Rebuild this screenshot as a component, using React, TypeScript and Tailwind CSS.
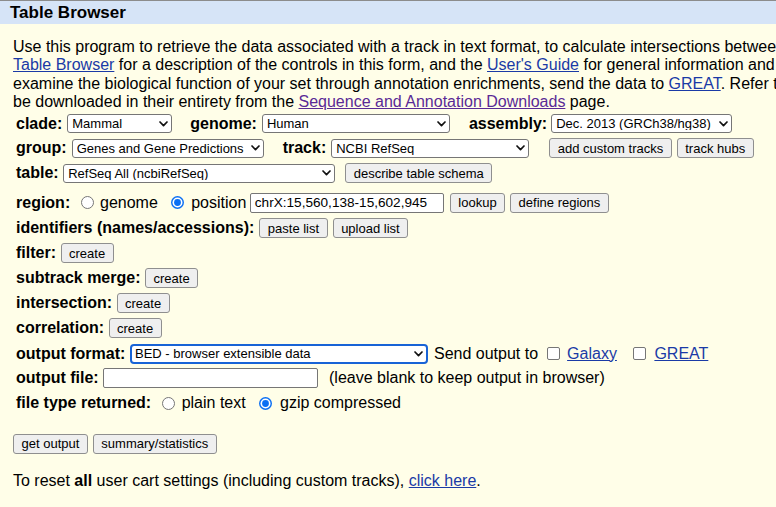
import React from "react";

const LINK = "text-[#1a3aa6] underline";
const VISITED = "text-[#5a2a96] underline";

function Chevron() {
  return (
    <svg width="9" height="6" viewBox="0 0 9 6" className="shrink-0 mr-[3px]">
      <path d="M1 1 L4.5 4.6 L8 1" fill="none" stroke="#111" strokeWidth="1.7" strokeLinecap="round" strokeLinejoin="round" />
    </svg>
  );
}

function Select({ className, children, focus }: { className: string; children: React.ReactNode; focus?: boolean }) {
  const base = focus
    ? "border-2 border-[#1863d6] rounded-[4px] h-[20px] pl-[3px]"
    : "border border-[#767676] rounded-[3px] h-[19px] pl-[4px]";
  return (
    <div className={`flex items-center shrink-0 bg-white text-[13px] leading-none ${base} ${className}`}>
      <span className="flex-1 overflow-hidden whitespace-nowrap">{children}</span>
      <Chevron />
    </div>
  );
}

function Button({ className = "", children }: { className?: string; children: React.ReactNode }) {
  return (
    <div className={`flex items-center shrink-0 h-[20px] px-[7.5px] border border-[#8f8f8f] rounded-[3px] bg-[#efefef] text-[13px] leading-none whitespace-nowrap ${className}`}>
      {children}
    </div>
  );
}

function Input({ className, value }: { className: string; value?: string }) {
  return (
    <div className={`flex items-center shrink-0 h-[20px] border border-[#767676] rounded-[2px] bg-white pl-[4px] text-[13.6px] leading-none whitespace-nowrap ${className}`}>
      {value}
    </div>
  );
}

function Radio({ checked, className }: { checked?: boolean; className: string }) {
  return (
    <svg width="13" height="13" viewBox="0 0 13 13" className={`shrink-0 ${className}`}>
      {checked ? (
        <>
          <circle cx="6.5" cy="6.5" r="6.5" fill="#0b6ff3" />
          <circle cx="6.5" cy="6.5" r="5" fill="white" />
          <circle cx="6.5" cy="6.5" r="3.4" fill="#0b6ff3" />
        </>
      ) : (
        <circle cx="6.5" cy="6.5" r="6" fill="white" stroke="#767676" strokeWidth="1" />
      )}
    </svg>
  );
}

function Checkbox({ className }: { className: string }) {
  return <div className={`shrink-0 w-[13px] h-[13px] rounded-[2px] border border-[#767676] bg-white ${className}`} />;
}

function Row({ className, children }: { className: string; children: React.ReactNode }) {
  return <div className={`flex items-center whitespace-nowrap ${className}`}>{children}</div>;
}

export default function App() {
  return (
    <div className="w-[776px] h-[507px] overflow-hidden bg-[#fffee8] text-black text-[16px] font-['Liberation_Sans',Arial,sans-serif]">
      <div className="h-[24px] border-t border-[#8c8c8c] bg-[#d6e4f7] flex items-center pl-[10px] font-bold text-[17px]">
        Table Browser
      </div>

      <div className="pl-[13px] mt-[13.5px] leading-[18.5px] whitespace-nowrap">
        <div>
          Use this program to retrieve the data associated with a track in text format, to calculate intersections between tracks, and to retrieve DNA sequence covered by a track. See
        </div>
        <div>
          <span className={LINK}>Table Browser</span> for a description of the controls in this form, and the{" "}
          <span className={LINK}>User's Guide</span> for general information and sample queries. For more complex queries, you may want to use Galaxy or our public MySQL server. To
        </div>
        <div>
          examine the biological function of your set through annotation enrichments, send the data to{" "}
          <span className={LINK}>GREAT</span>. Refer to the Credits page for the list of contributors and usage restrictions associated with these data. All tables can
        </div>
        <div>
          be downloaded in their entirety from the <span className={VISITED}>Sequence and Annotation Downloads</span> page.
        </div>
      </div>

      <div className="pl-[16px] flex flex-col">
        <Row className="h-[24px]">
          <b>clade:</b>
          <Select className="ml-[5px] w-[105px]">Mammal</Select>
          <b className="ml-[18px]">genome:</b>
          <Select className="ml-[5px] w-[188px]">Human</Select>
          <b className="ml-[19px]">assembly:</b>
          <Select className="ml-[4px] w-[181px]">Dec. 2013 (GRCh38/hg38)</Select>
        </Row>
        <Row className="h-[25px]">
          <b>group:</b>
          <Select className="ml-[5px] w-[192px]">Genes and Gene Predictions</Select>
          <b className="ml-[19px]">track:</b>
          <Select className="ml-[5px] w-[198px]">NCBI RefSeq</Select>
          <Button className="ml-[20px]">add custom tracks</Button>
          <Button className="ml-[5px]">track hubs</Button>
        </Row>
        <Row className="h-[25px]">
          <b>table:</b>
          <Select className="ml-[4.5px] w-[272px]">RefSeq All (ncbiRefSeq)</Select>
          <Button className="ml-[10px]">describe table schema</Button>
        </Row>
        <Row className="h-[26px] mt-[4px]">
          <b>region:</b>
          <Radio className="ml-[10.8px]" />
          <span className="ml-[6px]">genome</span>
          <Radio checked className="ml-[13.3px]" />
          <span className="ml-[7px]">position</span>
          <Input className="ml-[3.5px] w-[194px]" value="chrX:15,560,138-15,602,945" />
          <Button className="ml-[6px]">lookup</Button>
          <Button className="ml-[5px]">define regions</Button>
        </Row>
        <Row className="h-[25px]">
          <b>identifiers (names/accessions):</b>
          <Button className="ml-[5px]">paste list</Button>
          <Button className="ml-[5px]">upload list</Button>
        </Row>
        <Row className="h-[25px]">
          <b>filter:</b>
          <Button className="ml-[4.5px]">create</Button>
        </Row>
        <Row className="h-[25px]">
          <b>subtrack merge:</b>
          <Button className="ml-[4.5px]">create</Button>
        </Row>
        <Row className="h-[25px]">
          <b>intersection:</b>
          <Button className="ml-[4.5px]">create</Button>
        </Row>
        <Row className="h-[25px]">
          <b>correlation:</b>
          <Button className="ml-[4.5px]">create</Button>
        </Row>
        <Row className="h-[26px]">
          <b>output format:</b>
          <Select focus className="ml-[4.7px] w-[298px]">BED - browser extensible data</Select>
          <span className="ml-[6px]">Send output to</span>
          <Checkbox className="ml-[9px]" />
          <span className={`ml-[7px] ${LINK}`}>Galaxy</span>
          <Checkbox className="ml-[16.5px]" />
          <span className={`ml-[8px] ${LINK}`}>GREAT</span>
        </Row>
        <Row className="h-[23px]">
          <b>output file:</b>
          <Input className="ml-[4.4px] w-[215px]" />
          <span className="ml-[11px]">(leave blank to keep output in browser)</span>
        </Row>
        <Row className="h-[27px]">
          <b>file type returned:</b>
          <Radio className="ml-[10.5px]" />
          <span className="ml-[7px]">plain text</span>
          <Radio checked className="ml-[13.3px]" />
          <span className="ml-[8px]">gzip compressed</span>
        </Row>
      </div>

      <div className="pl-[13px] mt-[17px] flex items-center">
        <Button>get output</Button>
        <Button className="ml-[5px]">summary/statistics</Button>
      </div>

      <div className="pl-[13px] mt-[15px] whitespace-nowrap">
        To reset <b>all</b> user cart settings (including custom tracks), <span className={LINK}>click here</span>.
      </div>
    </div>
  );
}
